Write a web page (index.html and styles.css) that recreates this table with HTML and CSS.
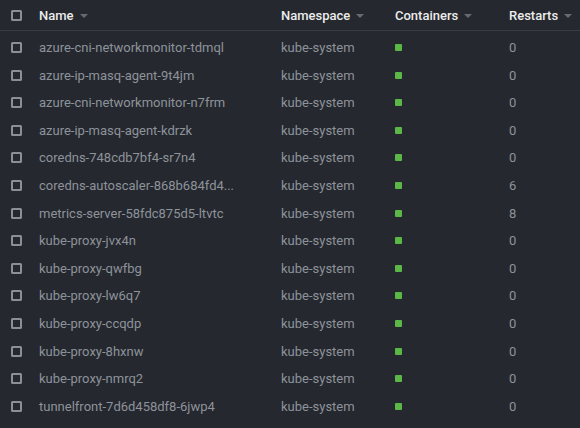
FILE: index.html
```html
<!DOCTYPE html>
<html>
<head>
<meta charset="utf-8">
<link rel="stylesheet" href="styles.css">
</head>
<body>
<div class="table">
  <div class="row head">
    <div class="c-check"><span class="cb"></span></div>
    <div class="c-name"><span>Name</span><span class="caret"></span></div>
    <div class="c-ns"><span>Namespace</span><span class="caret"></span></div>
    <div class="c-cont"><span>Containers</span><span class="caret"></span></div>
    <div class="c-rest"><span>Restarts</span><span class="caret"></span></div>
  </div>
  <div class="body">
    <div class="row"><div class="c-check"><span class="cb"></span></div><div class="c-name"><span class="name">azure-cni-networkmonitor-tdmql</span></div><div class="c-ns">kube-system</div><div class="c-cont"><span class="dot"></span></div><div class="c-rest">0</div></div>
    <div class="row"><div class="c-check"><span class="cb"></span></div><div class="c-name"><span class="name">azure-ip-masq-agent-9t4jm</span></div><div class="c-ns">kube-system</div><div class="c-cont"><span class="dot"></span></div><div class="c-rest">0</div></div>
    <div class="row"><div class="c-check"><span class="cb"></span></div><div class="c-name"><span class="name">azure-cni-networkmonitor-n7frm</span></div><div class="c-ns">kube-system</div><div class="c-cont"><span class="dot"></span></div><div class="c-rest">0</div></div>
    <div class="row"><div class="c-check"><span class="cb"></span></div><div class="c-name"><span class="name">azure-ip-masq-agent-kdrzk</span></div><div class="c-ns">kube-system</div><div class="c-cont"><span class="dot"></span></div><div class="c-rest">0</div></div>
    <div class="row"><div class="c-check"><span class="cb"></span></div><div class="c-name"><span class="name">coredns-748cdb7bf4-sr7n4</span></div><div class="c-ns">kube-system</div><div class="c-cont"><span class="dot"></span></div><div class="c-rest">0</div></div>
    <div class="row"><div class="c-check"><span class="cb"></span></div><div class="c-name"><span class="name">coredns-autoscaler-868b684fd4...</span></div><div class="c-ns">kube-system</div><div class="c-cont"><span class="dot"></span></div><div class="c-rest">6</div></div>
    <div class="row"><div class="c-check"><span class="cb"></span></div><div class="c-name"><span class="name">metrics-server-58fdc875d5-ltvtc</span></div><div class="c-ns">kube-system</div><div class="c-cont"><span class="dot"></span></div><div class="c-rest">8</div></div>
    <div class="row"><div class="c-check"><span class="cb"></span></div><div class="c-name"><span class="name">kube-proxy-jvx4n</span></div><div class="c-ns">kube-system</div><div class="c-cont"><span class="dot"></span></div><div class="c-rest">0</div></div>
    <div class="row"><div class="c-check"><span class="cb"></span></div><div class="c-name"><span class="name">kube-proxy-qwfbg</span></div><div class="c-ns">kube-system</div><div class="c-cont"><span class="dot"></span></div><div class="c-rest">0</div></div>
    <div class="row"><div class="c-check"><span class="cb"></span></div><div class="c-name"><span class="name">kube-proxy-lw6q7</span></div><div class="c-ns">kube-system</div><div class="c-cont"><span class="dot"></span></div><div class="c-rest">0</div></div>
    <div class="row"><div class="c-check"><span class="cb"></span></div><div class="c-name"><span class="name">kube-proxy-ccqdp</span></div><div class="c-ns">kube-system</div><div class="c-cont"><span class="dot"></span></div><div class="c-rest">0</div></div>
    <div class="row"><div class="c-check"><span class="cb"></span></div><div class="c-name"><span class="name">kube-proxy-8hxnw</span></div><div class="c-ns">kube-system</div><div class="c-cont"><span class="dot"></span></div><div class="c-rest">0</div></div>
    <div class="row"><div class="c-check"><span class="cb"></span></div><div class="c-name"><span class="name">kube-proxy-nmrq2</span></div><div class="c-ns">kube-system</div><div class="c-cont"><span class="dot"></span></div><div class="c-rest">0</div></div>
    <div class="row"><div class="c-check"><span class="cb"></span></div><div class="c-name"><span class="name">tunnelfront-7d6d458df8-6jwp4</span></div><div class="c-ns">kube-system</div><div class="c-cont"><span class="dot"></span></div><div class="c-rest">0</div></div>
  </div>
</div>
</body>
</html>
```
FILE: styles.css
```css
html, body {
  margin: 0;
  padding: 0;
  background: #25282e;
  width: 580px;
  height: 428px;
  overflow: hidden;
}
body {
  font-family: Roboto, "Liberation Sans", sans-serif;
  font-size: 13px;
  color: #8d939b;
}
.table {
  display: flex;
  flex-direction: column;
}
.row {
  display: grid;
  grid-template-columns: 39px 242px 114px 114px 1fr;
  align-items: center;
  height: 27.6px;
}
.head {
  height: 30px;
  border-bottom: 1px solid #383c43;
  color: #ececec;
  font-weight: 500;
}
.body {
  padding-top: 2.8px;
}
.c-check {
  padding-left: 11px;
  display: flex;
  align-items: center;
}
.head .c-check { padding-top: 1px; }
.cb {
  display: block;
  width: 11px;
  height: 11px;
  box-sizing: border-box;
  border: 2px solid #8a8f98;
  border-radius: 1.5px;
}
.head > div {
  display: flex;
  align-items: center;
}
.caret {
  margin-left: 6px;
  width: 0;
  height: 0;
  border-left: 4px solid transparent;
  border-right: 4px solid transparent;
  border-top: 4px solid #666b73;
  margin-top: 1px;
}
.name {
  display: block;
  white-space: nowrap;
}
.dot {
  display: block;
  width: 7px;
  height: 7px;
  border-radius: 1px;
  background: #5cb846;
}
```
